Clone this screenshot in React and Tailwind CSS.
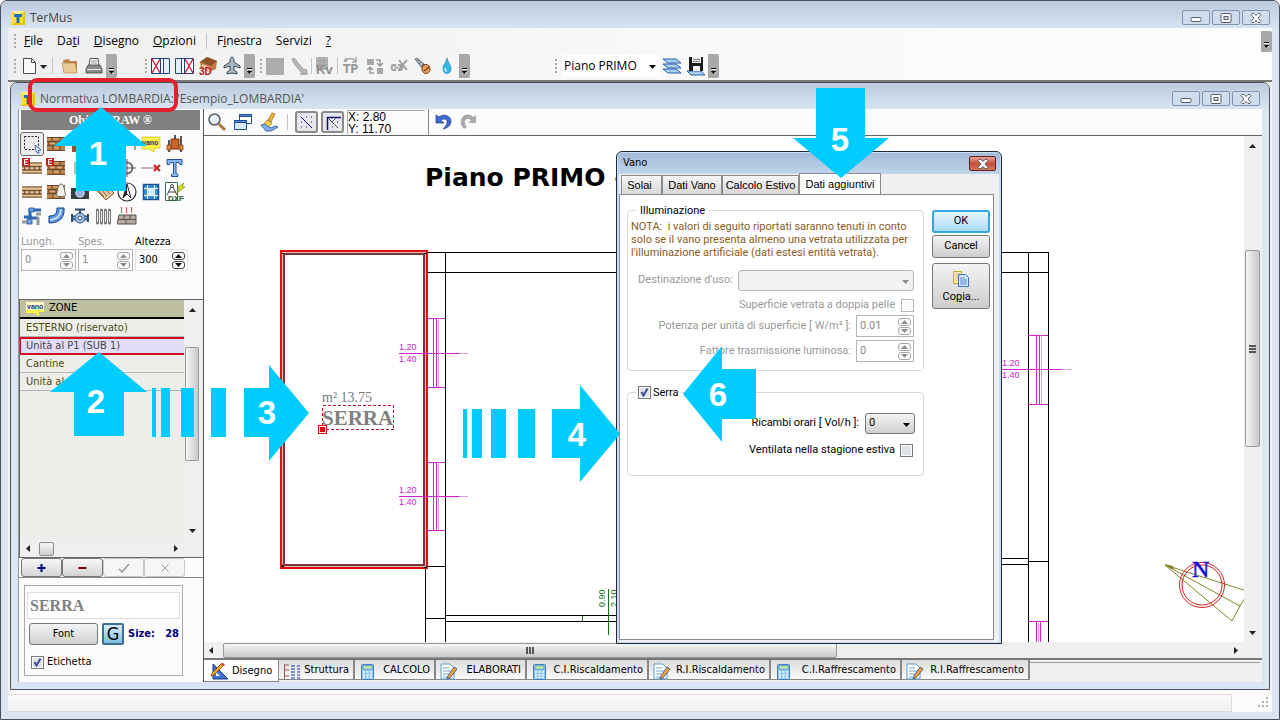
import { useState } from "react";

const ui = "font-['DejaVu_Sans_Condensed','DejaVu_Sans',sans-serif]";
const dlg = "font-['Roboto',sans-serif]";

function Svg({ w = 20, h = 20, className = "", children }) {
  return (
    <svg width={w} height={h} viewBox={`0 0 ${w} ${h}`} className={`shrink-0 ${className}`} fill="none" aria-hidden="true">
      {children}
    </svg>
  );
}

function AppLogo() {
  return (
    <Svg w={16} h={16}>
      <path d="M1 1h14v14H1z" fill="#ffe227" />
      <path d="M1 1h14L8 5z" fill="#fff59a" />
      <path d="M15 1v14H1l3-2h9V3z" fill="#eebc10" />
      <path d="M4 4h8v3H9.500v6h-3V7H4z" fill="#1673b5" />
    </Svg>
  );
}

function CaptionButtons() {
  const box = "flex h-[15px] w-7 items-center justify-center rounded-[2px] border border-[#8193b3] bg-[#cfddec]";
  return (
    <div className="flex gap-[2px]">
      <button className={box} aria-label="Riduci">
        <Svg w={12} h={10}>
          <rect x="1" y="4.500" width="10" height="4" rx="1" fill="#fff" stroke="#555b6b" />
        </Svg>
      </button>
      <button className={box} aria-label="Ingrandisci">
        <Svg w={12} h={10}>
          <rect x="1" y=".500" width="10" height="9" rx="1" fill="#fff" stroke="#555b6b" />
          <rect x="4" y="3.500" width="4" height="3" fill="#cfddec" stroke="#555b6b" />
        </Svg>
      </button>
      <button className={box} aria-label="Chiudi">
        <CloseGlyph />
      </button>
    </div>
  );
}

function CloseGlyph() {
  return (
    <Svg w={12} h={10}>
      <path d="M1 1.500L2 .500h2L6 2.500 8 .500h2l1 1L8 5l3 3.500-1 1H8L6 7.500 4 9.500H2l-1-1L4 5z" fill="#fff" stroke="#4b5263" strokeWidth=".9" />
    </Svg>
  );
}

function Grip() {
  return (
    <Svg w={4} h={18}>
      <path d="M2 2v15" stroke="#a8a8a8" strokeWidth="2" strokeDasharray="2 2" />
    </Svg>
  );
}

function Overflow({ className = "h-6" }) {
  return (
    <button className={`flex w-[11px] shrink-0 items-end justify-center rounded-r-[2px] bg-[#a8a8a8] pb-[3px] ${className}`} aria-label="Altri pulsanti">
      <Svg w={7} h={8}>
        <path d="M1 1.500h5" stroke="#000" />
        <path d="M1 4h5L3.500 7z" fill="#000" />
        <path d="M1 2.500h5M4 7l2-2" stroke="#fff" strokeWidth=".8" />
      </Svg>
    </button>
  );
}

function Divider() {
  return <span className="block h-4 w-px shrink-0 bg-[#c4c4c4]" />;
}

/* ---------- main tool bar drawings ---------- */

const toolIcons = {
  page: (
    <>
      <path d="M4.500 2.500h8l4 4v11h-12z" fill="#fafafa" stroke="#4a4a4a" />
      <path d="M12.500 2.500v4h4" stroke="#4a4a4a" />
    </>
  ),
  folder: (
    <>
      <path d="M3 4l6-1 1 2h7v11l-11 1z" fill="#b9854a" />
      <path d="M2 7h13l2 10H4z" fill="#eacb98" stroke="#b98b50" strokeWidth=".7" />
    </>
  ),
  print: (
    <>
      <path d="M6 2.500h8l1 7H5z" fill="#f5f5f5" stroke="#555" />
      <path d="M7 5h6M7 7h6" stroke="#999" />
      <path d="M4 9h12l2 4v4H2v-4z" fill="#8b8b8b" stroke="#444" strokeWidth=".8" />
      <path d="M3 13.500h14" stroke="#e8e8e8" />
    </>
  ),
  wallLeft: (
    <>
      <path d="M1.500 2.500h18v15h-18zM10.500 2.500v15M13.500 2.500v15" fill="#fff" stroke="#1d3f86" />
      <path d="M2 3l8 14M10 3L2 17" stroke="#d5243c" strokeWidth="1.500" />
      <path d="M14 3h5v14h-5z" fill="#e4eefb" />
    </>
  ),
  wallRight: (
    <>
      <path d="M1.500 2.500h18v15h-18zM7.500 2.500v15M10.500 2.500v15" fill="#fff" stroke="#1d3f86" />
      <path d="M11 3l8 14M19 3l-8 14" stroke="#d5243c" strokeWidth="1.500" />
      <path d="M2 3h5v14H2z" fill="#e4eefb" />
    </>
  ),
  house3d: (
    <>
      <path d="M2 6l7-5 10 4-1 8-7 3-8-4z" fill="#c47a43" />
      <path d="M2 6l7-5 10 4-6 5z" fill="#8f5127" />
      <path d="M4 8l8 3v5l-8-3z" fill="#f1cba4" />
      <text x="1" y="19" fontSize="10" fontWeight="bold" fill="#b3121d" fontFamily="Liberation Sans">3D</text>
    </>
  ),
  plane: (
    <path d="M10 1c1.500 0 2 2 2 5l6 4v2l-6-2v4l3 2v2l-5-1-5 1v-2l3-2v-4l-6 2v-2l6-4c0-3 .5-5 2-5z" fill="#a8b4c0" stroke="#41505e" />
  ),
  grayBlock: <path d="M1 2h18v17H1z" fill="#acacac" />,
  grayTrowel: (
    <>
      <path d="M3 3c3-2 4 1 6 4l5 6 4 1v3h-5L6 9z" fill="#b5b5b5" stroke="#a5a5a5" />
      <path d="M11 18h8" stroke="#b1b1b1" strokeWidth="2" />
    </>
  ),
  kv: (
    <>
      <path d="M2 1h12v13H2z" fill="#b4b4b4" />
      <path d="M2 5h12M2 9h12M6 1v13M10 1v13" stroke="#a0a0a0" />
      <text x="2" y="18" fontSize="13" fontWeight="bold" fill="#8d8d8d" fontFamily="Liberation Sans">Kv</text>
    </>
  ),
  tp: (
    <>
      <path d="M4 6c2-4 7-5 11-1M15 1v5h-4M5 2l-2 4" stroke="#a4a4a4" strokeWidth="1.500" />
      <text x="2" y="17" fontSize="12" fontWeight="bold" fill="#989898" fontFamily="DejaVu Sans Condensed">TP</text>
    </>
  ),
  swap: (
    <>
      <path d="M2 3h7v6H2zM12 12h6v6h-6z" fill="#a7a7a7" />
      <path d="M11 4h4v5M12 7l3 3 3-3M9 17H5v-5M2 14l3-3 3 3" stroke="#9b9b9b" strokeWidth="1.500" />
    </>
  ),
  chainCut: (
    <>
      <path d="M7 9H5a2.500 2.500 0 000 5h2M9 11.500H5.500M9 9h2a2.500 2.500 0 010 5H9" stroke="#a0a0a0" strokeWidth="1.800" />
      <path d="M10 4l8 10M18 4l-8 9" stroke="#a0a0a0" strokeWidth="2" />
    </>
  ),
  screw: (
    <>
      <path d="M2 3l2-1 8 7-3 3z" fill="#b9c3cd" stroke="#4a5562" strokeWidth=".8" />
      <path d="M4 5l2-1M6 8l2-2M8 10l3-2" stroke="#4a5562" />
      <ellipse cx="13" cy="13" rx="4" ry="4.500" fill="#f0a058" stroke="#7c3c10" />
      <path d="M11 15l5-4" stroke="#7c3c10" strokeWidth="1.500" />
    </>
  ),
  drop: (
    <>
      <path d="M10 2c1 5 4 7 4 11a4 4.500 0 01-8 0c0-4 3-6 4-11z" fill="#35b8e6" stroke="#1182b5" strokeWidth=".7" />
      <path d="M8 12c0 2 1 3 2 3" stroke="#d9f6ff" strokeWidth="1.500" />
    </>
  ),
  layers: (
    <>
      <path d="M1 13h13l5 4H6zM1 8h13l5 4H6zM1 3h13l5 4H6z" fill="#a9cdf3" stroke="#2660a8" />
    </>
  ),
  saveLayers: (
    <>
      <path d="M1 15h14l4 4H5z" fill="#a9cdf3" stroke="#2660a8" />
      <path d="M3 1h14v14H3z" fill="#1b1b1b" />
      <path d="M6 1h9v6H6zM7 10h7v5H7z" fill="#f4f4f4" />
      <path d="M7 3.500h7M7 5.500h7" stroke="#555" strokeWidth=".8" />
    </>
  ),
  lens: (
    <>
      <circle cx="7.500" cy="7.500" r="5.500" fill="#e5f1fb" stroke="#5a5a5a" strokeWidth="1.500" />
      <path d="M5 6c1-2 3-2 4-1" stroke="#fff" />
      <path d="M12 12l6 6" stroke="#ab7739" strokeWidth="3" />
    </>
  ),
  windows: (
    <>
      <path d="M6.500 2.500h12v9h-12z" fill="#fff" stroke="#1e4d9c" />
      <path d="M6.500 2.500h12v2h-12z" fill="#4f87d6" stroke="#1e4d9c" />
      <path d="M1.500 8.500h12v9h-12z" fill="#d8e8fb" stroke="#1e4d9c" />
      <path d="M1.500 8.500h12v2h-12z" fill="#4f87d6" stroke="#1e4d9c" />
    </>
  ),
  brush: (
    <>
      <path d="M13 1l3 1-4 8-3-2z" fill="#f6b13c" stroke="#92600f" strokeWidth=".7" />
      <path d="M8 8l5 3-3 4-6-2z" fill="#f7d34a" stroke="#a1740f" strokeWidth=".7" />
      <path d="M2 13l4-1 5 4 6-2 2 1-7 4H7z" fill="#7fb0ee" stroke="#22508f" strokeWidth=".8" />
    </>
  ),
  undo: (
    <path d="M3 3v8h8L8 8.500c3-3 7-1 6 2.500-.4 2-2 4-4 6 5-1 8-4 8-8 0-5-7-8-12-4z" fill="#3d6bd0" stroke="#1a3c8c" strokeWidth=".7" />
  ),
  redo: (
    <path d="M17 3v8H9l3-2.500c-3-3-7-1-6 2.500.4 2 1 3 2 4l-3 2c-3-3-4-6-3-9 2-6 8-7 12-3z" fill="#a9a9a9" />
  ),
};

function Tool({ name, label }) {
  return (
    <button className="flex h-6 w-6 shrink-0 items-center justify-center" aria-label={label}>
      <Svg>{toolIcons[name]}</Svg>
    </button>
  );
}

/* ---------- drawing palette ---------- */

const bricks = (
  <>
    <path d="M1 3h18v14H1z" fill="#b8834f" />
    <path d="M1 3.500h18M1 7.500h18M1 11.500h18M1 16.500h18M6 3v4M14 3v4M3 8v4M10 8v4M17 8v4M7 12v4M14 12v4" stroke="#6b4423" />
    <path d="M2 5h3M7 5h6M4 9.500h5M11 9.500h5M8 14h5" stroke="#e3b27a" />
  </>
);

const paleBricks = (
  <>
    <path d="M0 4h20v12H0z" fill="#e9c9a2" />
    <path d="M0 5h20M0 15h20" stroke="#9a6f48" strokeWidth="1.600" />
    <path d="M0 8.500h20M0 12h20M2.500 8v4M7.500 8v4M12.500 8v4M17.500 8v4" stroke="#7a5030" strokeWidth="1.400" />
  </>
);

const redE = (
  <>
    <path d="M0 0h8v8H0z" fill="#c5201f" />
    <path d="M6 1.500H2.500v5H6M2.500 4h3" stroke="#fff" />
  </>
);

const vanoNote = (
  <>
    <path d="M1 3h18v11l-6 1v3l-5-3H1z" fill="#fff148" stroke="#c9b400" strokeWidth=".6" />
    <text x="1" y="11" fontSize="7" fontWeight="bold" fill="#2b2b66" fontFamily="Liberation Sans">vano</text>
  </>
);

const palette = [
  [
    "Selezione",
    <>
      <rect x="2.500" y="2.500" width="14" height="13" stroke="#222" strokeDasharray="2 1.500" />
      <path d="M13 11l6 5-3 .5 1 3-3-2z" fill="#fff" stroke="#3d66a8" />
    </>,
  ],
  ["Parete", bricks],
  ["Pilastro", <path d="M2 2h6v16H2z" fill="#a14a2d" />],
  ["Porta", <path d="M4 2h12v16H4z" fill="#c79d6d" />],
  ["Linea", <path d="M18 8v8" stroke="#444" />],
  ["Vano", vanoNote],
  [
    "Caldaia",
    <>
      <path d="M4 6v12M16 2v16M10 1v5" stroke="#54545f" strokeWidth="2" />
      <path d="M6 5h8v10H6z" fill="#c9642c" stroke="#7a3412" />
      <path d="M2 11h4v5H2zM14 11h4v5h-4z" fill="#d88a3a" stroke="#7a3412" strokeWidth=".7" />
    </>,
  ],
  ["Muro esterno", <>{paleBricks}{redE}</>],
  ["Parete esterna", <>{bricks}{redE}</>],
  ["Solaio", <path d="M4 4h12v12H4z" fill="#bbb" />],
  ["Tetto", <path d="M8 4h8v12H8z" fill="#bbb" />],
  [
    "Centro",
    <>
      <circle cx="10" cy="10" r="5.500" stroke="#555" strokeWidth="1.500" />
      <path d="M10 1v18M1 10h18" stroke="#555" />
    </>,
  ],
  [
    "Quota",
    <>
      <path d="M0 10h15" stroke="#b06060" />
      <path d="M13 7l6 6M19 7l-6 6" stroke="#c62020" strokeWidth="2" />
    </>,
  ],
  [
    "Testo",
    <path d="M2 1.500h15v5h-2l-1-2h-3v11l2 1v2H6.500v-2l2-1v-11h-3l-1 2h-2.500z" fill="#8db9ea" stroke="#1f4f9e" />,
  ],
  ["Muro", paleBricks],
  [
    "Ponte termico",
    <>
      {bricks}
      <path d="M10 13c2-2 1-11 5-11s3 9 5 11c0 2-10 2-10 0z" fill="#f4f1ea" stroke="#6f6a60" />
    </>,
  ],
  [
    "Foto",
    <>
      <path d="M1 6h5l1-3h6l1 3h5v11H1z" fill="#363c46" />
      <circle cx="10" cy="11" r="4" fill="#8db4de" stroke="#cfd8e2" strokeWidth="1.500" />
    </>,
  ],
  [
    "Righello",
    <>
      <path d="M1 7l12-4 7 8-8 7z" fill="#e6c9a0" stroke="#7f5c36" />
      <path d="M4 8l6 7M7 7l6 7M10 6l6 6" stroke="#7f5c36" />
    </>,
  ],
  [
    "Nord",
    <>
      <circle cx="10" cy="10" r="9" fill="#fff" stroke="#333" strokeWidth="1.200" />
      <path d="M10 2l4 14-4-4-4 4z" fill="#fff" stroke="#222" />
      <path d="M10 2l-4 14 4-4z" fill="#222" />
    </>,
  ],
  [
    "Finestra",
    <>
      <path d="M2.500 2.500h15v15h-15z" fill="#2f93d6" stroke="#1c4f92" strokeWidth="1.500" />
      <path d="M6.500 3v14M13.500 3v14M3 6.500h14M3 13.500h14" stroke="#fff" />
      <path d="M7 7h6v6H7z" fill="#c8eaff" />
    </>,
  ],
  [
    "DXF",
    <>
      <path d="M.5.5h12v18H.500z" fill="#fff" stroke="#3b6e4c" />
      <circle cx="7" cy="4" r="1.500" stroke="#444" />
      <path d="M6 5l-4 8M8 5l4 8M3 10h8" stroke="#444" />
      <path d="M19 1l-7 5h3l-3 5 8-6h-3z" fill="#f7e217" stroke="#6c8b1c" strokeWidth=".7" />
      <text x="3" y="19" fontSize="8" fontWeight="bold" fill="#265c34" fontFamily="Liberation Sans">DXF</text>
    </>,
  ],
  [
    "Tubi",
    <>
      <path d="M8 3v14M2 11h8M8 4h11M10 12h6" stroke="#2a68b0" strokeWidth="3" />
      <path d="M7 2h5v4H7zM5 13h5v5H5z" fill="#6aa4e2" stroke="#1e4f92" strokeWidth=".8" />
      <path d="M14 8h5M0 16h5M16 11v8" stroke="#8e989f" strokeWidth="3" />
    </>,
  ],
  [
    "Curva",
    <>
      <path d="M11 2h7c1 9-4 15-15 15v-7c6 0 8-2 8-8z" fill="#5d97e2" stroke="#173e86" />
      <path d="M15 3c0 6-3 10-11 11" stroke="#cfe4ff" strokeWidth="1.500" />
    </>,
  ],
  [
    "Valvola",
    <>
      <path d="M5 3.500h10M10 3v4" stroke="#2b4c78" strokeWidth="2" />
      <path d="M2 8v8M18 8v8" stroke="#2b4c78" strokeWidth="2" />
      <path d="M3 10h14v4H3z" fill="#8fb4dd" stroke="#2b4c78" />
      <circle cx="10" cy="12" r="5" fill="#a8c8ea" stroke="#2b4c78" />
      <circle cx="10" cy="12" r="2" fill="#fff" stroke="#2b4c78" />
    </>,
  ],
  [
    "Radiatore",
    <>
      <path d="M3.500 4v13M7.500 4v13M11.500 4v13M15.500 4v13" stroke="#777" strokeWidth="3" strokeLinecap="round" />
      <path d="M3.500 5v11M7.500 5v11M11.500 5v11M15.500 5v11" stroke="#f1f1f1" />
    </>,
  ],
  [
    "Pannello radiante",
    <>
      <path d="M5 7c-2-2 1-3-1-6M10 7c-2-2 1-3-1-6M15 7c-2-2 1-3-1-6" stroke="#c43c34" />
      <path d="M2 9h17v9H0z" fill="#b7aca4" stroke="#5a4f48" />
      <path d="M1 13.500h18M7 9v4M13 9v4M9 14v4" stroke="#5a4f48" />
    </>,
  ],
];

function Arrow({ dir = "down", color = "#222", className = "" }) {
  const d = { down: "M0 2h7L3.500 6z", up: "M0 6h7L3.500 2z", left: "M5 0v7L1 3.500z", right: "M2 0v7l4-3.500z" }[dir];
  return (
    <Svg w={7} h={7} className={className}>
      <path d={d} fill={color} />
    </Svg>
  );
}

function Spinner({ id, value, disabled, className = "" }) {
  const tone = disabled ? "#8e8e8e" : "#111";
  const btn = `flex h-2 w-[13px] items-center justify-center rounded-[3px] border ${disabled ? "border-[#a6a6a6]" : "border-[#444]"}`;
  return (
    <span className={`flex items-center border pr-[2px] ${disabled ? "border-[#b4b4b4]" : "border-[#e2e2e2]"} ${className}`}>
      <input id={id} defaultValue={value} disabled={disabled} className={`w-0 min-w-0 flex-1 bg-transparent px-[3px] outline-none ${disabled ? "text-[#8a8a8a]" : "text-black"}`} />
      <span className="flex flex-col gap-px">
        <button className={btn} disabled={disabled} aria-label="Aumenta"><Arrow dir="up" color={tone} /></button>
        <button className={btn} disabled={disabled} aria-label="Diminuisci"><Arrow color={tone} /></button>
      </span>
    </span>
  );
}

function Check({ id, checked, disabled }) {
  return (
    <span className="relative inline-flex h-[13px] w-[13px] shrink-0">
      <input
        id={id}
        type="checkbox"
        defaultChecked={checked}
        disabled={disabled}
        className={`peer h-[13px] w-[13px] appearance-none border shadow-[inset_0_0_0_1px_#fff] ${disabled ? "border-[#b5b5b5] bg-[#fafafa]" : "border-[#777] bg-[#dfe2e6]"}`}
      />
      <svg viewBox="0 0 13 13" className="pointer-events-none absolute inset-0 hidden peer-checked:block" fill="none">
        <path d="M3.500 6l2 3.500L9.500 2.500" stroke="#3a4f8c" strokeWidth="2" />
      </svg>
    </span>
  );
}

function LeftPanel() {
  const [zone, setZone] = useState(1);
  const zones = ["ESTERNO (riservato)", "Unità al P1 (SUB 1)", "Cantine", "Unità al P2"];
  const btn = "flex h-[19px] w-[41px] items-center justify-center rounded-[3px] border";

  return (
    <aside className={`flex w-[185px] shrink-0 flex-col border-r border-[#555] bg-[#fcfcfc] text-[11px] ${ui}`}>
      <h2 className="mr-[3px] ml-[2px] mt-px h-5 bg-[#808080] text-center font-['Liberation_Serif',serif] text-[12px] leading-5 font-bold text-white">
        ObjectDRAW ®
      </h2>
      <div className="grid w-[168px] grid-cols-7 pt-[2px] pl-px">
        {palette.map(([label, icon], i) => (
          <button
            key={label}
            aria-label={label}
            className={`flex h-6 w-6 items-center justify-center ${i === 0 ? "rounded-[3px] border border-[#666] bg-[#ececec]" : ""}`}
          >
            <Svg>{icon}</Svg>
          </button>
        ))}
      </div>

      <div className="mt-[7px] grid grid-cols-[55px_55px_55px] gap-x-[2px] pl-[2px] leading-[14px]">
        <label htmlFor="lungh" className="text-[#999]">Lungh.</label>
        <label htmlFor="spes" className="text-[#999]">Spes.</label>
        <label htmlFor="altezza">Altezza</label>
        <Spinner id="lungh" value="0" disabled className="h-[22px]" />
        <Spinner id="spes" value="1" disabled className="h-[22px]" />
        <Spinner id="altezza" value="300" className="h-[22px] w-[53px]" />
      </div>

      <div className="mt-7 flex flex-1 flex-col border-y border-l border-[#666] bg-[#edeee9] pr-[3px]">
        <div className="flex flex-1">
          <div className="min-w-0 flex-1">
            <div className="flex h-[19px] items-center gap-[5px] border-b-2 border-black bg-[#bfbfa2] pl-[6px]">
              <Svg w={18} h={16}>
                <path d="M0 1h18v10h-5v4l-5-3H0z" fill="#fff148" />
                <path d="M0 1h18v8H0z" fill="#fffbc4" />
                <text x="1" y="8" fontSize="7" fontWeight="bold" fill="#2b2b88" fontFamily="Liberation Sans">vano</text>
              </Svg>
              <span>ZONE</span>
            </div>
            <ul>
              {zones.map((z, i) => (
                <li key={z}>
                  <button
                    onClick={() => setZone(i)}
                    className={`block h-[18px] w-full text-left text-[#4a4a10] ${
                      zone === i
                        ? "border-y-2 border-l border-[#cf1020] bg-[#e2dcfb] pl-[5px] leading-[14px] text-[#444]"
                        : "border-b border-[#b4b4b4] pl-[6px] leading-[17px]"
                    }`}
                  >
                    {z}
                  </button>
                </li>
              ))}
            </ul>
          </div>
          <div className="flex w-4 flex-col items-center bg-[#efefef]">
            <Arrow dir="up" className="my-[6px]" />
            <div className="mt-[28px] h-[114px] w-[14px] rounded-[2px] border border-[#989898] bg-linear-to-r from-[#f6f6f6] to-[#c9c9cc]" />
            <Arrow className="mt-auto mb-[6px]" />
          </div>
        </div>
        <div className="flex h-[17px] items-center bg-[#efefef] pr-[21px] pl-[5px]">
          <Arrow dir="left" />
          <div className="ml-[7px] h-[14px] w-[15px] rounded-[2px] border border-[#8c8c8c] bg-linear-to-b from-[#f6f6f6] to-[#cfcfd2]" />
          <Arrow dir="right" className="ml-auto" />
        </div>
      </div>

      <div className="flex h-5 border-b border-[#888] pl-[2px]">
        <button className={`${btn} border-[#777] bg-linear-to-b from-[#f7f7f7] to-[#d5d5d5]`} aria-label="Aggiungi">
          <Svg w={9} h={9}><path d="M4.500 1v8M.5 5h8" stroke="#000080" strokeWidth="2" /></Svg>
        </button>
        <button className={`${btn} border-[#777] bg-linear-to-b from-[#f7f7f7] to-[#d5d5d5]`} aria-label="Rimuovi">
          <Svg w={9} h={9}><path d="M.5 5h8" stroke="#800000" strokeWidth="2" /></Svg>
        </button>
        <button disabled className={`${btn} border-[#c6c6c6] bg-[#f6f6f6]`} aria-label="Conferma">
          <Svg w={12} h={10}><path d="M1 6l3 3 7-8" stroke="#9a9a9a" strokeWidth="1.500" /></Svg>
        </button>
        <button disabled className={`${btn} border-[#c6c6c6] bg-[#f6f6f6]`} aria-label="Annulla">
          <Svg w={8} h={8}><path d="M.5.5l7 7M7.500.5l-7 7" stroke="#9a9a9a" /></Svg>
        </button>
      </div>

      <div className="mt-[7px] mb-[6px] ml-[5px] flex h-[91px] w-[159px] flex-col border border-[#aaa] px-[2px] pt-[6px]">
        <input
          aria-label="Etichetta del vano"
          defaultValue="SERRA"
          className="h-[27px] w-full border border-[#dcdcdc] bg-white px-[2px] font-['Liberation_Serif',serif] text-base font-bold text-[#808080] outline-none"
        />
        <div className="mt-1 flex items-center pl-[2px]">
          <button className="h-[22px] w-[69px] rounded-[3px] border border-[#777] bg-linear-to-b from-[#f5f5f5] to-[#cfcfcf]">Font</button>
          <button className="ml-[4px] h-[22px] w-[22px] rounded-[2px] border-2 border-[#3c6f90] bg-linear-to-b from-[#d8eefb] to-[#7cc0e4] text-[18px] leading-[18px]">G</button>
          <span className="ml-[4px] font-bold text-[#000080]">Size:</span>
          <span className="ml-auto pr-[1px] font-bold text-[#000080]">28</span>
        </div>
        <div className="mt-[10px] flex items-center gap-[3px] pl-1">
          <Check id="etichetta" checked />
          <label htmlFor="etichetta" className="leading-[14px]">Etichetta</label>
        </div>
      </div>
    </aside>
  );
}

/* ---------- plan ---------- */

const windows = [
  { x: 433, x1: 427, x2: 445, top: 318, bottom: 387, y: 353, from: 399 },
  { x: 433, x1: 427, x2: 445, top: 462, bottom: 530, y: 496, from: 399 },
  { x: 1036, x1: 1028, x2: 1048, top: 335, bottom: 404, y: 369, from: 1002 },
];

function Plan() {
  return (
    <svg className="min-h-0 w-0 min-w-0 flex-1 bg-white" fill="none" shapeRendering="crispEdges" aria-label="Pianta piano primo">
      <g transform="translate(-204 -136)">
        <text x="425" y="186" fontSize="25" fontWeight="bold" fill="#000" fontFamily="DejaVu Sans">Piano PRIMO -</text>

        <path
          d="M428 252.500H1048.500M428 272.500H1048.500M445.500 252V642M425.500 566V642M425 566.500H445M425 618.500H445M445 615.500H1001M445 621.500H1001M1028.500 252V642M1048.500 252V642M1001 558.500H1028M1001 564.500H1028M1028 561.500H1048"
          stroke="#000"
        />

        <path d="M280 250h148v319H280zM285 255v309h138V255z" fillRule="evenodd" fill="#e01010" />
        <path d="M282 252h144v315H282zM283 253v313h142V253z" fillRule="evenodd" fill="#d8c0c0" />
        <path d="M283 253h142v313H283zM285 255v309h138V255z" fillRule="evenodd" fill="#7c3434" />
        <path d="M282 254v-1h2M424 253h2v1M282 565v1h2M424 567h2v-1" stroke="#000" />

        {windows.map((w) => (
          <g key={`${w.x}-${w.y}`}>
            <path
              d={`M${w.x1} ${w.top + 0.5}H${w.x2}M${w.x1} ${w.bottom + 0.5}H${w.x2}M${w.x + 0.5} ${w.top}V${w.bottom}M${w.x + 3.5} ${w.top}V${w.bottom}M${w.from} ${w.y + 0.5}H${w.x + 26}`}
              stroke="#d020d0"
            />
            <path d={`M${w.x + 5.5} ${w.top}V${w.bottom}M${w.x + 26} ${w.y + 0.5}h9`} stroke="#dba0db" />
            <text x={w.from} y={w.y - 3} fontSize="9" fill="#d020d0" fontFamily="Liberation Sans">1.20</text>
            <text x={w.from} y={w.y + 9} fontSize="9" fill="#d020d0" fontFamily="Liberation Sans">1.40</text>
          </g>
        ))}
        <path d="M1028 621.500H1048M1036.500 621V642M1040.500 621V642" stroke="#d020d0" />
        <path d="M1038.500 621V642" stroke="#dba0db" />

        <path d="M582.500 616V621M608.500 589V635" stroke="#107010" />
        <text transform="translate(605 607) rotate(-90)" fontSize="9" fill="#107010" fontFamily="Liberation Sans">0.90</text>
        <text transform="translate(617 607) rotate(-90)" fontSize="9" fill="#107010" fontFamily="Liberation Sans">2.10</text>

        <text x="322" y="402" fontSize="14" fill="#7a7a7a" fontFamily="Liberation Serif">m² 13.75</text>
        <text x="322" y="425" fontSize="21" fontWeight="bold" fill="#808080" fontFamily="Liberation Serif">SERRA</text>
        <rect x="322.500" y="405.500" width="71" height="24" stroke="#c01028" strokeDasharray="3 2" />
        <path d="M318.500 425.500h8v8h-8z" fill="#fff" stroke="#dd1010" />
        <path d="M320 427h5v5h-5z" fill="#dd1010" />

        <g shapeRendering="auto">
          <path d="M1165 565L1250 592M1165 565L1240 606M1165 565L1232 621L1240 606L1250 590" stroke="#84842a" />
          <path d="M1165 564l8 2 1 4z" fill="#84842a" />
          <circle cx="1202" cy="585" r="22.500" stroke="#d42020" />
          <circle cx="1202" cy="585" r="20" stroke="#d42020" />
          <text x="1192" y="577" fontSize="24" fill="#1010e0" stroke="#1010e0" strokeWidth=".5" fontFamily="Liberation Serif">N</text>
        </g>
      </g>
    </svg>
  );
}

const sheetIcons = {
  draw: (
    <>
      <path d="M4 2v15h15z" fill="#3f73cf" stroke="#143782" />
      <path d="M7 10v4h4z" fill="#fff" />
      <path d="M13 1l2 2-10 10-3 1 1-3z" fill="#f0a030" stroke="#7c3a12" strokeWidth=".7" />
      <path d="M12 2l2-1 2 2-1 1z" fill="#d4362e" />
    </>
  ),
  tree: (
    <>
      <path d="M3.500 2v15M3 3h5M3 8h5M3 14h5" stroke="#9a5a50" />
      <path d="M10 4h4M10 7h4M10 10h4M10 13h4M10 16h4M16 4h3M16 7h3M16 10h3M16 13h3M16 16h3" stroke="#5573c8" strokeWidth="1.500" />
    </>
  ),
  calc: (
    <>
      <rect x="4.500" y="2.500" width="12" height="15" rx="1" fill="#8fc6f0" stroke="#3c7fb8" />
      <path d="M6 4h9v3H6z" fill="#c9f29a" stroke="#3c7fb8" strokeWidth=".6" />
      <path d="M6 10h2M9.500 10h2M13 10h2M6 13h2M9.500 13h2M13 13h2M6 15.500h2M9.500 15.500h2M13 15.500h2" stroke="#fff" strokeWidth="1.600" />
    </>
  ),
  report: (
    <>
      <path d="M3 2h9l4 4v11H3z" fill="#fff" stroke="#5d9bcb" />
      <path d="M5 6h6M5 9h8M5 12h6M5 15h5" stroke="#6ba6d8" />
      <path d="M16 5l3 2-7 9-3 1 1-3z" fill="#f0a23a" stroke="#2a4a7c" strokeWidth=".8" />
    </>
  ),
};

const sheets = [
  ["Struttura", "tree", "w-[76px]"],
  ["CALCOLO", "calc", "w-[81px]"],
  ["ELABORATI", "report", "w-[91px]"],
  ["C.I.Riscaldamento", "calc", "w-[122px]"],
  ["R.I.Riscaldamento", "report", "w-[122px]"],
  ["C.I.Raffrescamento", "calc", "w-[131px]"],
  ["R.I.Raffrescamento", "report", "w-[128px]"],
];

function SheetTabs() {
  return (
    <nav className={`flex h-[22px] items-start bg-[#f0f0f0] text-[11px] whitespace-nowrap ${ui}`}>
      <button className="flex h-[22px] w-[75px] shrink-0 items-center gap-[3px] border-r border-b border-[#888] bg-white pt-[2px] pl-[5px]">
        <Svg>{sheetIcons.draw}</Svg>
        Disegno
      </button>
      {sheets.map(([label, icon, width]) => (
        <button
          key={label}
          className={`flex h-5 shrink-0 items-center justify-between border-r-2 border-b border-[#888] bg-linear-to-b from-[#dcdcdc] to-[#fafafa] pt-[2px] pr-1 pl-[2px] ${width}`}
        >
          <Svg w={20} h={18}>{sheetIcons[icon]}</Svg>
          {label}
        </button>
      ))}
      <span className="mt-[2px] mr-[2px] h-px flex-1 bg-[#999]" />
    </nav>
  );
}

function Workspace() {
  const toggle = "flex h-[22px] w-[23px] items-center justify-center rounded-[3px] border-2 border-[#8a8a8a] bg-[#e6e6ec]";
  return (
    <section className="flex min-w-0 flex-1 flex-col">
      <div className="flex h-[27px] items-center border-b border-[#666] bg-[#fcfcfc] pl-px">
        <span className="flex gap-[2px]">
          <Tool name="lens" label="Zoom" />
          <Tool name="windows" label="Finestre" />
          <Tool name="brush" label="Pulisci" />
        </span>
        <span className="mr-[7px] ml-[6px]"><Divider /></span>
        <button className={toggle} aria-label="Snap griglia">
          <Svg w={17} h={17}>
            <path d="M3 3l11 11" stroke="#101070" />
            <path d="M3 8h1M8 3h1M13 3h1M13 8h1M3 13h1M8 13h1" stroke="#101070" />
          </Svg>
        </button>
        <button className={`${toggle} ml-[3px]`} aria-label="Snap angolo">
          <Svg w={17} h={17}>
            <path d="M3.500 16V3.500H17" stroke="#101070" strokeWidth="1.500" />
            <path d="M4 4l10 10M8 8l4-4" stroke="#555" />
            <path d="M8 13h1M13 8h1" stroke="#101070" />
          </Svg>
        </button>
        <div className="ml-[3px] h-6 w-[78px] border-t border-l border-[#aaa] font-['Liberation_Sans',sans-serif] text-[12px] leading-[12px]">
          <p>X: 2.80</p>
          <p>Y: 11.70</p>
        </div>
        <span className="ml-[3px] h-[26px] w-px bg-[#888]" />
        <span className="ml-[2px] flex gap-[2px]">
          <Tool name="undo" label="Annulla" />
          <Tool name="redo" label="Ripeti" />
        </span>
      </div>

      <div className="flex min-h-[300px] flex-1">
        <Plan />
        <div className="flex w-[18px] flex-col items-center bg-[#efefef] pr-[2px]">
          <Arrow dir="up" className="mt-[6px]" />
          <div className="mt-[101px] flex h-[197px] w-[15px] flex-col items-center justify-center gap-px rounded-[2px] border border-[#999] bg-linear-to-r from-[#f5f5f5] to-[#c8c8cc]">
            <i className="h-[2px] w-[7px] bg-[#555]" />
            <i className="h-[2px] w-[7px] bg-[#555]" />
            <i className="h-[2px] w-[7px] bg-[#555]" />
          </div>
          <Arrow className="mt-auto mb-[6px]" />
        </div>
      </div>
      <div className="flex h-[18px] items-center border-b-2 border-[#777] bg-[#efefef] pr-[23px] pl-1">
        <Arrow dir="left" />
        <div className="ml-2 flex h-[15px] w-[614px] items-center justify-center gap-px rounded-[2px] border border-[#999] bg-linear-to-b from-[#f6f6f6] to-[#c9c9cc]">
          <i className="h-[7px] w-[2px] bg-[#555]" />
          <i className="h-[7px] w-[2px] bg-[#555]" />
          <i className="h-[7px] w-[2px] bg-[#555]" />
        </div>
        <Arrow dir="right" className="ml-auto" />
      </div>
      <SheetTabs />
    </section>
  );
}

/* ---------- room dialog ---------- */

function VanoDialog() {
  const tab = "h-[19px] border border-b-0 border-[#8a8a8a] bg-linear-to-b from-[#f6f6f6] to-[#d8d8d8] font-['Liberation_Sans',sans-serif] leading-[18px] whitespace-nowrap";
  const btn = "rounded-[3px] border border-[#777] bg-linear-to-b from-[#f4f4f4] to-[#cdcdcd]";
  const line = "flex items-center justify-end";

  return (
    <div
      role="dialog"
      aria-label="Vano"
      className={`absolute top-[150px] left-[615px] flex h-[493px] w-[386px] flex-col rounded-t-[6px] border border-[#1c2b36] bg-[#c9dcf0] p-px text-[11px] ${dlg}`}
    >
      <header className="flex h-[21px] items-center justify-between rounded-t-[4px] bg-linear-to-b from-[#a2bbd9] to-[#c1d5ec] pr-1 pl-[5px]">
        <h2 className={ui}>Vano</h2>
        <button className="flex h-[15px] w-[27px] items-center justify-center rounded-[2px] border border-[#5b2420] bg-linear-to-b from-[#e4a295] via-[#c8503c] to-[#d8745c]" aria-label="Chiudi">
          <CloseGlyph />
        </button>
      </header>

      <div className="mx-px flex flex-1 flex-col bg-[#f0f0f0] pr-[5px] pb-[2px]">
        <div className="flex h-5 items-end pl-[2px]">
          <button className={`${tab} w-[41px] pr-1`}>Solai</button>
          <button className={`${tab} w-[60px]`}>Dati Vano</button>
          <button className={`${tab} w-[77px]`}>Calcolo Estivo</button>
          <button className="h-[21px] w-[82px] border border-b-0 border-[#8a8a8a] bg-white font-['Liberation_Sans',sans-serif] leading-[16px] whitespace-nowrap">Dati aggiuntivi</button>
        </div>

        <div className="flex flex-1 gap-2 border border-[#8a8a8a] bg-white pt-2 pr-[3px] pl-[7px]">
          <div className="flex w-[297px] shrink-0 flex-col">
            <fieldset className="h-[168px] min-w-0 rounded-[4px] border border-[#d9d9d9] px-[3px]">
              <legend className="ml-[5px] px-1 leading-[15px]">Illuminazione</legend>
              <p className="mt-[2px] leading-[13px] whitespace-nowrap text-[#8a5c1e]">
                NOTA:&nbsp; i valori di seguito riportati saranno tenuti in conto
                <br />
                solo se il vano presenta almeno una vetrata utilizzata per
                <br />
                l'illuminazione artificiale (dati estesi entità vetrata).
              </p>
              <div className="mt-[11px] flex flex-col gap-[3px] pr-[6px] text-[#999]">
                <div className={line}>
                  <label htmlFor="dest">Destinazione d'uso:</label>
                  <span className="relative ml-[5px] flex">
                    <select id="dest" disabled className="h-[21px] w-[176px] appearance-none rounded-[3px] border border-[#b5b5b5] bg-[#f2f2f2]">
                      <option></option>
                    </select>
                    <Arrow color="#8e8e8e" className="pointer-events-none absolute top-2 right-[5px]" />
                  </span>
                </div>
                <div className={`${line} mt-1 h-[14px]`}>
                  <label htmlFor="doppia" className="mr-[6px]">Superficie vetrata a doppia pelle</label>
                  <Check id="doppia" disabled />
                </div>
                <div className={line}>
                  <label htmlFor="potenza" className="mr-[5px]">Potenza per unità di superficie [ W/m² ]:</label>
                  <Spinner id="potenza" value="0.01" disabled className="h-[22px] w-[58px]" />
                </div>
                <div className={line}>
                  <label htmlFor="fattore" className="mr-[5px]">Fattore trasmissione luminosa:</label>
                  <Spinner id="fattore" value="0" disabled className="h-[22px] w-[58px]" />
                </div>
              </div>
            </fieldset>

            <fieldset className="mt-[14px] h-[91px] min-w-0 rounded-[4px] border border-[#d9d9d9] px-2">
              <legend className="flex items-center gap-[2px] px-[2px] leading-[15px]">
                <Check id="serra" checked />
                <label htmlFor="serra">Serra</label>
              </legend>
              <div className={`${line} mt-[13px]`}>
                <label htmlFor="ricambi" className="mr-[6px]">Ricambi orari [ Vol/h ]:</label>
                <span className="relative flex">
                  <select id="ricambi" className="h-[21px] w-[50px] appearance-none rounded-[3px] border border-[#777] bg-linear-to-b from-[#f4f4f4] to-[#d0d0d0] px-[3px]">
                    <option>0</option>
                  </select>
                  <Arrow color="#000" className="pointer-events-none absolute top-2 right-[5px]" />
                </span>
              </div>
              <div className={`${line} mt-[8px] pr-[2px]`}>
                <label htmlFor="ventilata" className="mr-[5px]">Ventilata nella stagione estiva</label>
                <Check id="ventilata" />
              </div>
            </fieldset>
          </div>

          <div className="mt-[7px] flex flex-1 flex-col">
            <button className="h-[23px] rounded-[3px] border-2 border-[#35a7dc] bg-linear-to-b from-[#e8f6fd] to-[#a9dcf5]">OK</button>
            <button className={`${btn} mt-[2px] h-[23px]`}>Cancel</button>
            <button className={`${btn} mt-[5px] flex h-[46px] flex-col items-center justify-end pb-[2px]`}>
              <Svg w={18} h={18}>
                <path d="M1.500 1.500h8v12h-8z" fill="#fff3a0" stroke="#c9a92b" />
                <path d="M3 4h5M3 6h5M3 8h5M3 10h5" stroke="#d8b94a" strokeWidth=".8" />
                <path d="M6.500 4.500h7l3 3v9h-10z" fill="#d5e7fa" stroke="#3a74bb" />
                <path d="M8 8h5M8 10h7M8 12h7M8 14h7" stroke="#3a74bb" strokeWidth=".8" />
              </Svg>
              <span className="leading-[18px]">Co<u>p</u>ia...</span>
            </button>
          </div>
        </div>
      </div>
    </div>
  );
}

/* ---------- numbered call-outs ---------- */

const callouts = [
  { n: 1, x: 98, y: 165, d: "M101 107L147 146H126V191H76V146H54z" },
  { n: 2, x: 96, y: 413, d: "M99 352L147 392H124V436H74V392H50z" },
  { n: 3, x: 267, y: 424, d: "M309 413L269 461V437H244V388H269V365zM152 388h4v49h-4zM161 388h9v49h-9zM181 388h13v49h-13zM211 388h15v49h-15z" },
  { n: 4, x: 577, y: 446, d: "M620 434L580 482V458H552V409H580V385zM463 409h4v49h-4zM472 409h10v49h-10zM491 409h15v49h-15zM518 409h17v49h-17z" },
  { n: 5, x: 840, y: 151, d: "M841 178L889 138H865V88H816V138H793z" },
  { n: 6, x: 718, y: 406, d: "M683 394L722 346V369H756V419H722V442z" },
];

function Callouts() {
  return (
    <svg className="pointer-events-none absolute -top-px -left-px h-full w-full" fill="none" aria-hidden="true">
      <rect x="30" y="80" width="146" height="30" rx="7" stroke="#e3202c" strokeWidth="4" />
      {callouts.map((c) => (
        <g key={c.n}>
          <path d={c.d} fill="#00ccff" />
          <text x={c.x} y={c.y} textAnchor="middle" fontSize="33" fontWeight="bold" fill="#fff" fontFamily="Liberation Sans">
            {c.n}
          </text>
        </g>
      ))}
    </svg>
  );
}

const menu = [
  ["", "F", "ile"],
  ["Da", "t", "i"],
  ["", "D", "isegno"],
  ["", "O", "pzioni"],
  null,
  ["F", "i", "nestra"],
  ["Servizi", "", ""],
  ["", "?", ""],
];

export default function App() {
  return (
    <div className="relative flex min-h-screen flex-col overflow-hidden rounded-t-[7px] border border-[#4a4f58] bg-[#d9e5f2] px-[7px] pb-[7px] font-['Open_Sans',sans-serif] text-[12px] text-black">
      <header className="-mx-[7px] flex h-[27px] items-center bg-linear-to-b from-[#bccbdd] to-[#d7e4f2] pt-[6px] pr-[9px] pl-[9px] text-[#444]">
        <AppLogo />
        <h1 className="ml-1 flex-1">TerMus</h1>
        <CaptionButtons />
      </header>

      <div className="bg-linear-to-r from-[#efefef] via-[#f8f8f8] to-[#fdfdfd]">
        <div className="flex h-[26px] items-center pl-[5px]">
          <Grip />
          <ul className="flex flex-1 items-center">
            {menu.map((m, i) =>
              m ? (
                <li key={i}>
                  <button className="px-[7px]">
                    {m[0]}
                    <u>{m[1]}</u>
                    {m[2]}
                  </button>
                </li>
              ) : (
                <li key={i} className="mx-[3px]"><Divider /></li>
              )
            )}
          </ul>
          <Overflow className="h-[21px]" />
        </div>
        <div className="flex h-[26px] items-center pb-[2px] pl-[5px]">
          <Grip />
          <Tool name="page" label="Nuovo" />
          <Arrow className="ml-[-1px]" />
          <span className="mx-[5px]"><Divider /></span>
          <Tool name="folder" label="Apri" />
          <Tool name="print" label="Stampa" />
          <Overflow />
          <span className="ml-[27px] flex items-center">
            <Grip />
            <Tool name="wallLeft" label="Filo sinistro" />
            <Tool name="wallRight" label="Filo destro" />
            <Tool name="house3d" label="Vista 3D" />
            <Tool name="plane" label="Volo" />
            <Overflow />
          </span>
          <span className="ml-1 flex items-center">
            <Grip />
            <Tool name="grayBlock" label="Blocco" />
            <Tool name="grayTrowel" label="Strumenti" />
            <Divider />
            <Tool name="kv" label="Kv" />
            <span className="mx-px"><Divider /></span>
            <Tool name="tp" label="Trasporta" />
            <Tool name="swap" label="Scambia" />
            <Tool name="chainCut" label="Scollega" />
            <Tool name="screw" label="Impianto" />
            <Tool name="drop" label="Condensa" />
            <Overflow />
          </span>
          <span className="ml-[84px] flex items-center">
            <Grip />
            <span className="relative ml-1 flex">
              <select aria-label="Piano" className="h-[22px] w-[98px] appearance-none bg-white pl-[2px]">
                <option>Piano PRIMO</option>
              </select>
              <Arrow color="#000" className="pointer-events-none absolute top-2 right-1" />
            </span>
            <Tool name="layers" label="Livelli" />
            <Tool name="saveLayers" label="Salva livelli" />
            <Overflow />
          </span>
        </div>
      </div>

      <main className="flex flex-1 flex-col border-t-2 border-[#777] bg-[#f4f4f4] pr-[2px] pl-[2px]">
        <div className="flex flex-1 flex-col rounded-t-[7px] border border-[#4a4f58] bg-[#d9e5f2] px-[7px] pb-[7px]">
          <header className="-mx-[7px] flex h-[26px] items-center rounded-t-[6px] bg-linear-to-b from-[#bccbdd] to-[#d7e4f2] pt-[5px] pr-[9px] pl-[9px] text-[#555]">
            <AppLogo />
            <h2 className="ml-1 flex-1">Normativa LOMBARDIA: 'Esempio_LOMBARDIA'</h2>
            <CaptionButtons />
          </header>
          <div className="flex flex-1 border-l border-[#999]">
            <LeftPanel />
            <Workspace />
          </div>
        </div>
      </main>

      <footer className="flex h-[22px] items-end justify-between bg-[#fbfbfb] pt-[3px]">
        <div className="mr-6 h-[18px] flex-1 border border-l-0 border-[#dadada] bg-linear-to-b from-[#fafafa] to-[#f0f0f0]" />
        <Svg w={14} h={14} className="mr-[2px] mb-[2px]">
          <path d="M10 2h2M6 6h2M10 6h2M2 10h2M6 10h2M10 10h2" stroke="#b3b3b3" strokeWidth="2" />
        </Svg>
      </footer>

      <VanoDialog />
      <Callouts />
    </div>
  );
}
